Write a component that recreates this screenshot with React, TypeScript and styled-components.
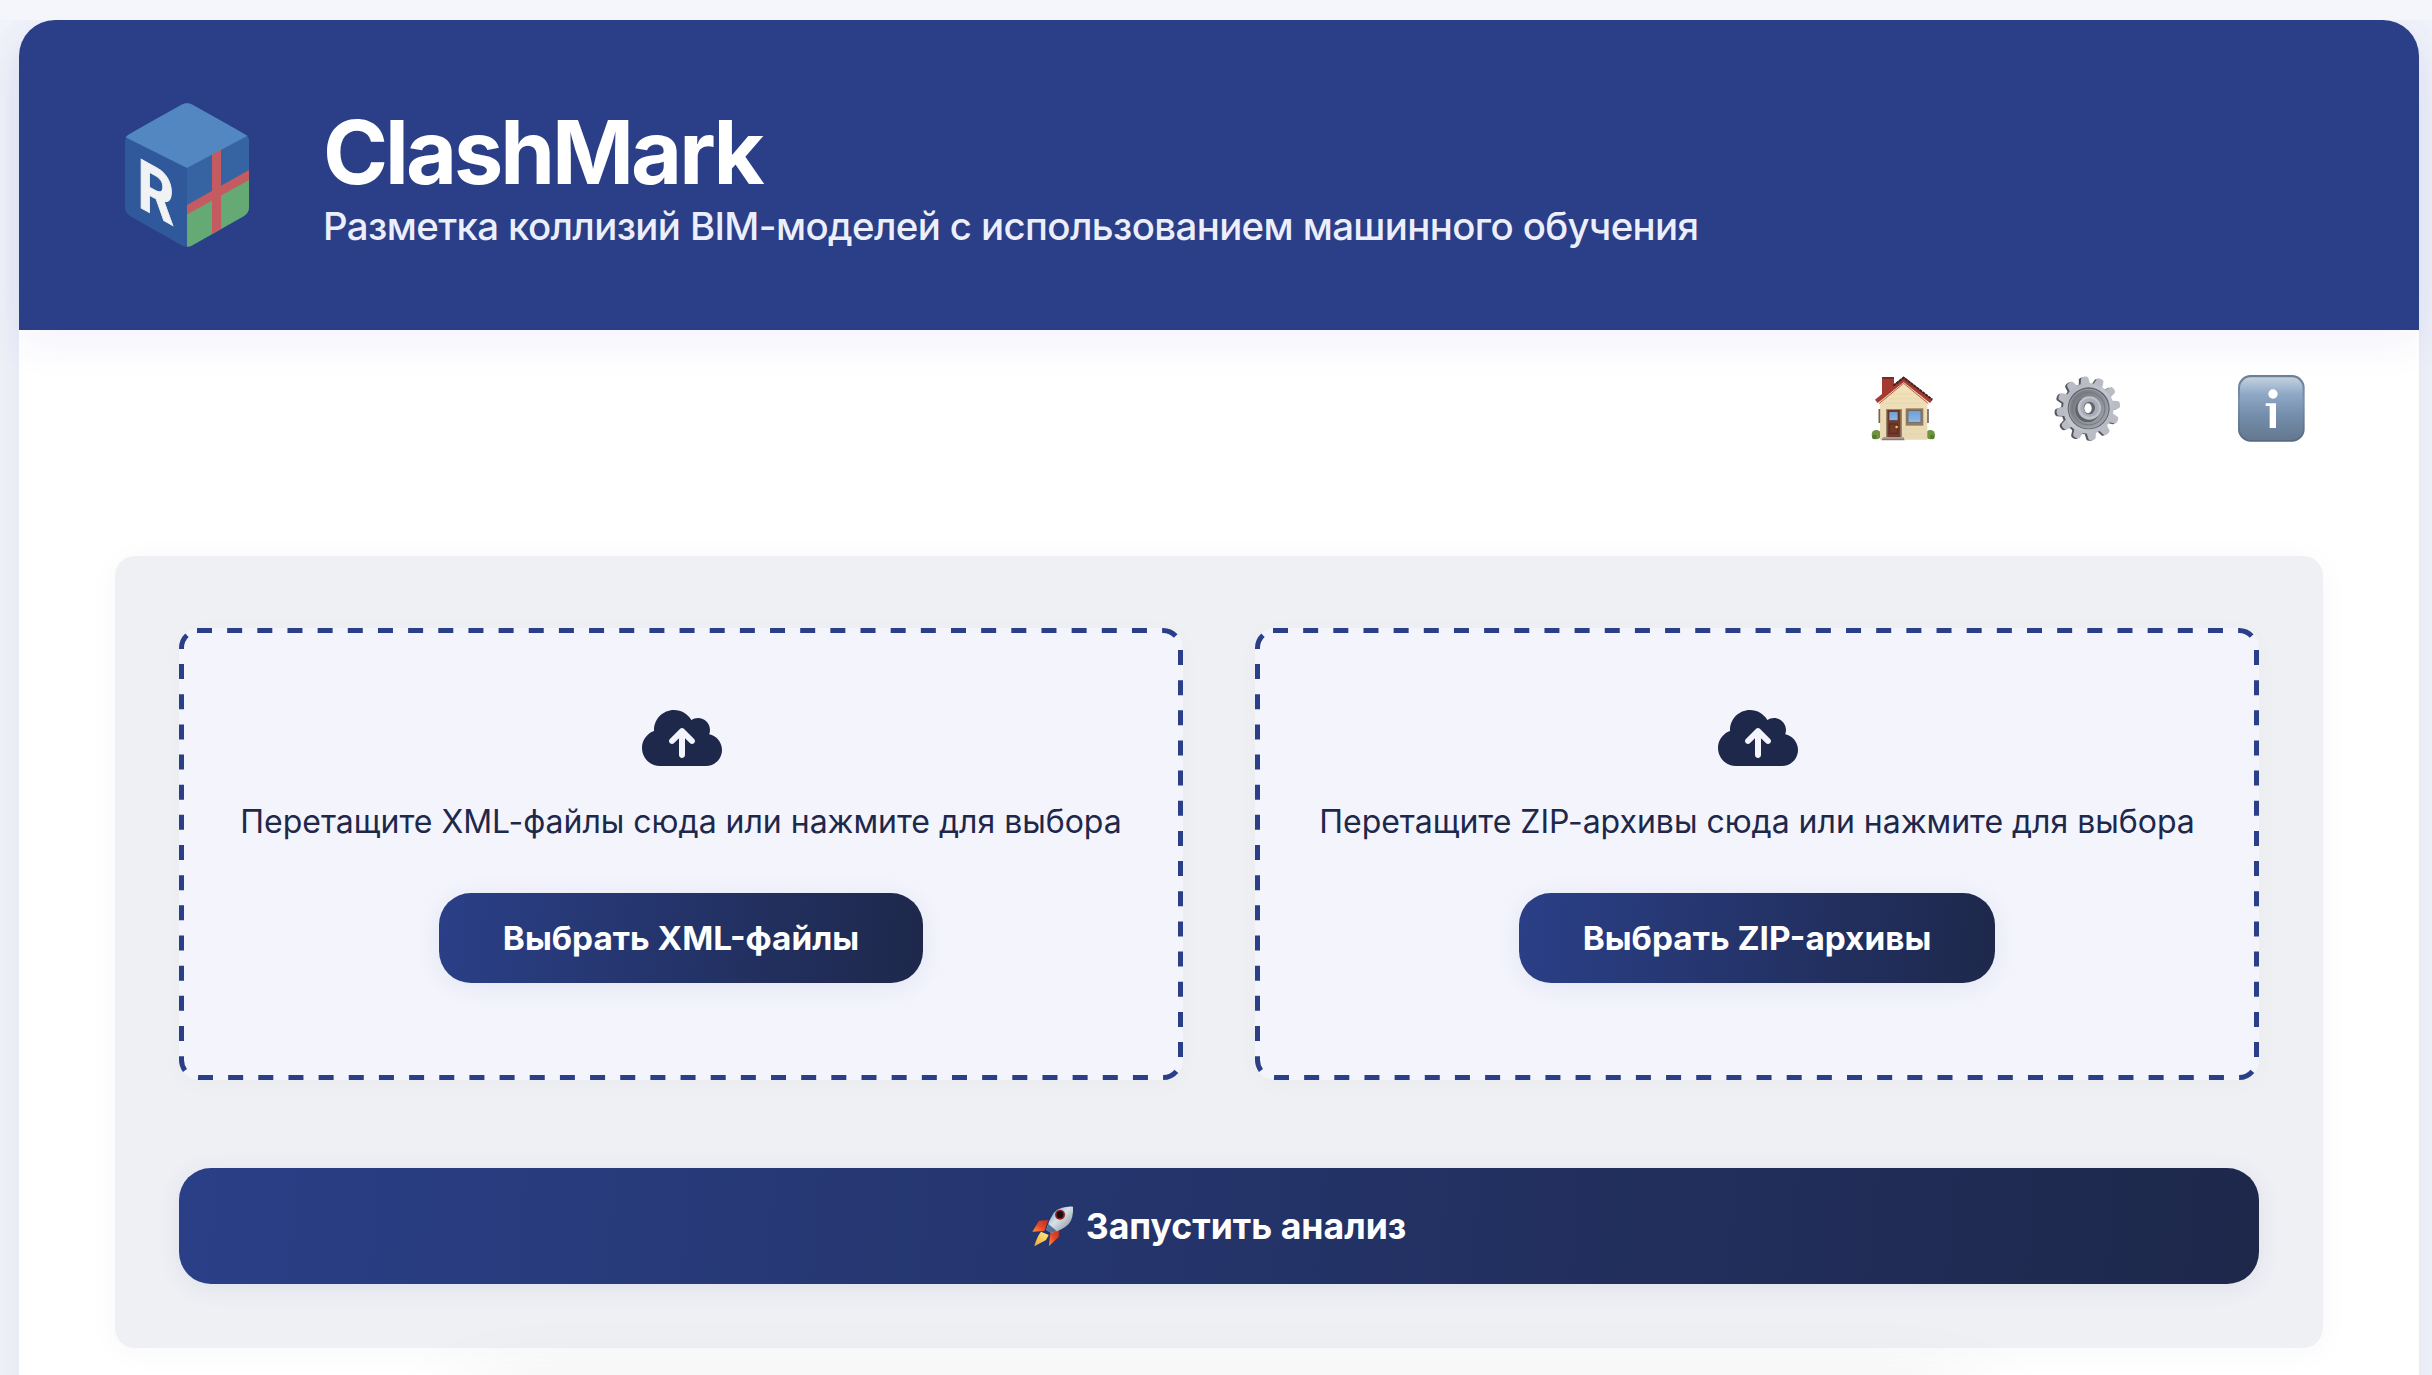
import React from "react";
import styled, { createGlobalStyle } from "styled-components";
import { FaCloudArrowUp } from "react-icons/fa6";

const GlobalStyle = createGlobalStyle`
  * { box-sizing: border-box; }
  body {
    margin: 0;
    background: #f4f6fb;
    font-family: Inter, "Liberation Sans", sans-serif;
    color: #1e284b;
  }
`;

const Viewport = styled.div`
  height: 1375px;
  padding: 20px 13px 0 19px;
  overflow: hidden;
`;

const Container = styled.main`
  height: 1600px;
  border-radius: 36px;
  background: #fff;
  box-shadow: 0 16px 64px rgba(42, 63, 135, 0.1);
  clip-path: inset(0 -40px -40px -40px);
`;

const Header = styled.header`
  display: flex;
  gap: 64px;
  height: 310px;
  padding: 83px 96px;
  border-radius: 36px 36px 0 0;
  background: #2a3f87;
  box-shadow: 0 8px 48px rgba(60, 70, 190, 0.08);
`;

const Title = styled.h1`
  margin: 1px 0 0;
  font-size: 88px;
  line-height: 96px;
  font-weight: 700;
  letter-spacing: -3px;
  color: #fff;
`;

const Subtitle = styled.p`
  margin: 0;
  font-size: 38.4px;
  line-height: 52px;
  font-weight: 450;
  letter-spacing: -0.61px;
  color: #eceffb;
`;

const Nav = styled.nav`
  display: flex;
  justify-content: flex-end;
  gap: 117.33px;
  padding: 45px 114.33px 0 0;
  height: 226px;
`;

const NavIcon = styled.svg`
  width: 66.67px;
  height: 66.67px;
`;

const Panel = styled.section`
  margin: 0 96px;
  height: 792px;
  padding: 72px 64px 64px;
  border-radius: 20px;
  background: #eff0f4;
  box-shadow: 0 4px 32px rgba(42, 63, 135, 0.035);
`;

const Zones = styled.div`
  display: grid;
  grid-template-columns: 1fr 1fr;
  gap: 72px;
`;

const Zone = styled.div`
  position: relative;
  display: flex;
  flex-direction: column;
  align-items: center;
  height: 452px;
  padding-top: 78px;
  border-radius: 20px;
  background: #f3f4fc;
  box-shadow: 0 4px 24px rgba(0, 0, 0, 0.025);
`;

const DashedOutline = styled.svg`
  position: absolute;
  inset: 0;
  width: 100%;
  height: 100%;
`;

const CloudIcon = styled(FaCloudArrowUp)`
  width: 80px;
  height: 64px;
  margin-left: 2px;
`;

const Hint = styled.p`
  margin: 28px 0 47px;
  font-size: 32px;
  line-height: 48px;
  letter-spacing: -0.02px;
  white-space: nowrap;
`;

const Button = styled.button<{ $wide?: boolean }>`
  display: flex;
  align-items: center;
  justify-content: center;
  gap: 12px;
  width: ${(p) => (p.$wide ? "100%" : "auto")};
  height: ${(p) => (p.$wide ? "116px" : "90px")};
  margin-top: ${(p) => (p.$wide ? "88px" : "0")};
  padding: 0 64px;
  border: 0;
  border-radius: 32px;
  background: linear-gradient(95deg, #2a3f87, #1e284b);
  box-shadow: 0 4px 24px rgba(42, 63, 135, 0.08);
  font-family: inherit;
  font-size: ${(p) => (p.$wide ? "35.6px" : "33.35px")};
  font-weight: 700;
  color: #fff;
  white-space: nowrap;
`;

const Results = styled.section`
  height: 200px;
  margin: 72px 450px 0;
  border-radius: 24px;
  box-shadow: 0 0 100px rgba(0, 0, 0, 0.18);
`;

const LogoSvg = styled.svg`
  flex: none;
  width: 144px;
  height: 144px;
`;

const RocketSvg = styled.svg`
  width: 42px;
  height: 41px;
`;

function Logo() {
  return (
    <LogoSvg viewBox="0 0 144 144">
      <defs>
        <clipPath id="cube">
          <path d="M67 1.6 Q72 -1 77 1.6 L130 31 Q134 34 134 38 V104 Q134 110 129 113 L77 142.5 Q72 145 67 142.5 L15 113 Q10 110 10 104 V38 Q10 34 14 31 Z" />
        </clipPath>
      </defs>
      <g clipPath="url(#cube)">
        <rect width="144" height="144" fill="#30599b" />
        <path d="M72 65 L134 30 V144 H72 Z" fill="#3664a3" />
        <path d="M72 107 L134 72 V144 H72 Z" fill="#65aa75" />
        <path d="M72 102 L134 67 V77 L72 111.500 Z" fill="#c35b60" />
        <path d="M97 40 H106 V144 H97 Z" fill="#c35b60" />
        <path d="M10 34 L13 32 L72 -3 L131 32 L134 32 L72 65 Z" fill="#5387c2" />
      </g>
      <text
        transform="matrix(0.83 0.46 0 1 22.6 103)"
        fontFamily="Inter, sans-serif"
        fontSize="67"
        fontWeight="700"
        fill="#f1f2f4"
        stroke="#f1f2f4"
        strokeWidth="1"
      >
        R
      </text>
    </LogoSvg>
  );
}

function HouseIcon() {
  return (
    <NavIcon viewBox="90 75 200 200">
      <defs>
        <linearGradient id="wall" x1="0" y1="0" x2="0" y2="1">
          <stop offset="0" stopColor="#f3e3bb" />
          <stop offset="1" stopColor="#e8d8b3" />
        </linearGradient>
        <linearGradient id="pane" x1="0" y1="0" x2="0" y2="1">
          <stop offset="0" stopColor="#6f9fd6" />
          <stop offset="1" stopColor="#8fb9e6" />
        </linearGradient>
      </defs>
      <rect x="126" y="81" width="36" height="55" rx="3" fill="#a23a30" />
      <rect x="126" y="81" width="36" height="6" rx="2" fill="#7c2924" />
      <circle cx="109" cy="254" r="14" fill="#6e9440" />
      <circle cx="103" cy="261" r="7" fill="#557a30" />
      <circle cx="271" cy="254" r="14" fill="#6e9440" />
      <circle cx="277" cy="261" r="7" fill="#557a30" />
      <path d="M120 150 L191 90 L262 150 V269 H120 Z" fill="url(#wall)" />
      <path d="M150 132H232M135 146H247M122 160H260M186 236H260M186 252H260" stroke="#e4d3ab" strokeWidth="2" />
      <path d="M118 177V219M264 177V219" stroke="#73645a" strokeWidth="5" />
      <path d="M109 154 L191 88 L274 154" fill="none" stroke="#a53a31" strokeWidth="13" />
      <path d="M160 107 L191 83 L277 149" fill="none" stroke="#3c2424" strokeWidth="6" strokeDasharray="9 2" />
      <path d="M117 161 L191 100 L265 161" fill="none" stroke="#c65a49" strokeWidth="3" />
      <path d="M138 262 V177 H186 V262 Z" fill="#9b8568" />
      <rect x="142" y="180" width="39" height="82" fill="#713b2b" />
      <rect x="147" y="185" width="27" height="27" fill="url(#pane)" stroke="#503024" strokeWidth="2" />
      <path d="M148 222H173V250H148Z" fill="none" stroke="#56291f" strokeWidth="3" />
      <circle cx="170" cy="231" r="4" fill="#edbb57" />
      <rect x="197" y="175" width="53" height="52" fill="#927b60" />
      <rect x="204" y="182" width="39" height="36" fill="url(#pane)" stroke="#685747" strokeWidth="2" />
      <path d="M130 262H190L194 271H124Z" fill="#827a75" />
      <path d="M130 262H190V266H130Z" fill="#b4aaa3" />
    </NavIcon>
  );
}

const TEETH = Array.from({ length: 12 }, (_, i) => -7 + i * 30);

function GearShape({ fill }: { fill: string }) {
  return (
    <g fill={fill}>
      <circle cx="745" cy="175" r="76" />
      {TEETH.map((a) => (
        <path
          key={a}
          d="M808 159 L836 164 Q841 166 841 175 Q841 184 836 186 L808 191 Z"
          transform={`rotate(${a} 745 175)`}
        />
      ))}
    </g>
  );
}

function GearIcon() {
  return (
    <NavIcon viewBox="642 75 200 200">
      <defs>
        <linearGradient id="steel" x1="0" y1="0" x2="1" y2="1">
          <stop offset="0" stopColor="#aeb1ba" />
          <stop offset="0.5" stopColor="#c5c8d0" />
          <stop offset="1" stopColor="#b0b4be" />
        </linearGradient>
        <linearGradient id="dish" x1="0" y1="0" x2="1" y2="1">
          <stop offset="0" stopColor="#71747b" />
          <stop offset="1" stopColor="#a2a5ad" />
        </linearGradient>
      </defs>
      <g transform="translate(-6 2)">
        <GearShape fill="#55575c" />
      </g>
      <GearShape fill="#b9bcc5" />
      <circle cx="745" cy="175" r="74" fill="url(#steel)" />
      <circle cx="746" cy="175" r="63" fill="#65686f" />
      <circle cx="746" cy="176" r="58" fill="url(#dish)" stroke="#b4b7bf" strokeWidth="2" />
      <circle cx="746" cy="176" r="49" fill="none" stroke="#74777e" strokeWidth="3" />
      <circle cx="743" cy="179" r="37" fill="#606269" />
      <circle cx="748" cy="174" r="35" fill="#bfc3cd" />
      <circle cx="749" cy="173" r="28" fill="#a9adb8" />
      <ellipse cx="748" cy="174" rx="17" ry="19" fill="#63666d" />
      <ellipse cx="744" cy="175" rx="11" ry="15" fill="#fff" />
    </NavIcon>
  );
}

function InfoIcon() {
  return (
    <NavIcon viewBox="1194 75 200 200">
      <defs>
        <linearGradient id="tile" x1="0" y1="0" x2="0" y2="1">
          <stop offset="0" stopColor="#c4d1df" />
          <stop offset="0.27" stopColor="#8ea8c6" />
          <stop offset="0.6" stopColor="#748eac" />
          <stop offset="1" stopColor="#64788f" />
        </linearGradient>
        <linearGradient id="rim" x1="0" y1="0" x2="0" y2="1">
          <stop offset="0" stopColor="#6b7e95" />
          <stop offset="0.4" stopColor="#7890ad" />
          <stop offset="1" stopColor="#55697f" />
        </linearGradient>
      </defs>
      <rect x="1194" y="75" width="200" height="200" rx="38" fill="url(#rim)" />
      <rect x="1200" y="82" width="188" height="188" rx="32" fill="url(#tile)" />
      <circle cx="1299" cy="132" r="14" fill="#fff" />
      <path d="M1277 160H1308V234H1289V168H1277Z" fill="#fff" />
    </NavIcon>
  );
}

function Rocket() {
  return (
    <RocketSvg viewBox="99 169 126 123">
      <defs>
        <linearGradient id="hull" x1="0" y1="0" x2="1" y2="1">
          <stop offset="0" stopColor="#5688bd" />
          <stop offset="0.45" stopColor="#d8e2e7" />
          <stop offset="1" stopColor="#77848c" />
        </linearGradient>
        <linearGradient id="fin" x1="1" y1="0" x2="0" y2="1">
          <stop offset="0" stopColor="#b82f1e" />
          <stop offset="0.55" stopColor="#e9492b" />
          <stop offset="1" stopColor="#ff9a3c" />
        </linearGradient>
        <linearGradient id="flame" x1="1" y1="0" x2="0" y2="1">
          <stop offset="0" stopColor="#fff08a" />
          <stop offset="1" stopColor="#f5a72c" />
        </linearGradient>
      </defs>
      <path d="M120 213 L148 211 L136 244 L100 246 Z" fill="url(#fin)" />
      <path d="M154 248 L181 240 L179 262 L150 289 Z" fill="url(#fin)" />
      <path d="M126 246 L149 256 L141 271 L106 290 Q112 264 126 246Z" fill="url(#flame)" />
      <path d="M222 171 Q185 169 164 190 Q149 212 142 240 L157 250 Q190 242 209 223 Q224 206 222 171Z" fill="url(#hull)" />
      <path d="M142 240 L157 250 L174 245 L148 223Z" fill="#566f96" />
      <circle cx="184" cy="195" r="17" fill="#c3cbd0" />
      <circle cx="183" cy="195" r="15" fill="#8f2423" />
      <circle cx="183" cy="195" r="10" fill="#160d15" />
    </RocketSvg>
  );
}

function DropZone({ hint, action }: { hint: string; action: string }) {
  return (
    <Zone>
      <DashedOutline viewBox="0 0 1004 452">
        <path
          d="M18 2.5 H984 A17.500 17.500 0 0 1 1001.500 20 V432 A17.500 17.500 0 0 1 984 449.500 H20 A17.500 17.500 0 0 1 2.500 432 V20 A17.500 17.500 0 0 1 20 2.500"
          fill="none"
          stroke="#2a3f87"
          strokeWidth="5"
          strokeDasharray="15 15.160"
        />
      </DashedOutline>
      <CloudIcon />
      <Hint>{hint}</Hint>
      <Button>{action}</Button>
    </Zone>
  );
}

export default function App() {
  return (
    <>
      <GlobalStyle />
      <Viewport>
        <Container>
          <Header>
            <Logo />
            <div>
              <Title>ClashMark</Title>
              <Subtitle>Разметка коллизий BIM-моделей с использованием машинного обучения</Subtitle>
            </div>
          </Header>
          <Nav>
            <HouseIcon />
            <GearIcon />
            <InfoIcon />
          </Nav>
          <Panel>
            <Zones>
              <DropZone hint="Перетащите XML-файлы сюда или нажмите для выбора" action="Выбрать XML-файлы" />
              <DropZone hint="Перетащите ZIP-архивы сюда или нажмите для выбора" action="Выбрать ZIP-архивы" />
            </Zones>
            <Button $wide>
              <Rocket />
              Запустить анализ
            </Button>
          </Panel>
          <Results />
        </Container>
      </Viewport>
    </>
  );
}
